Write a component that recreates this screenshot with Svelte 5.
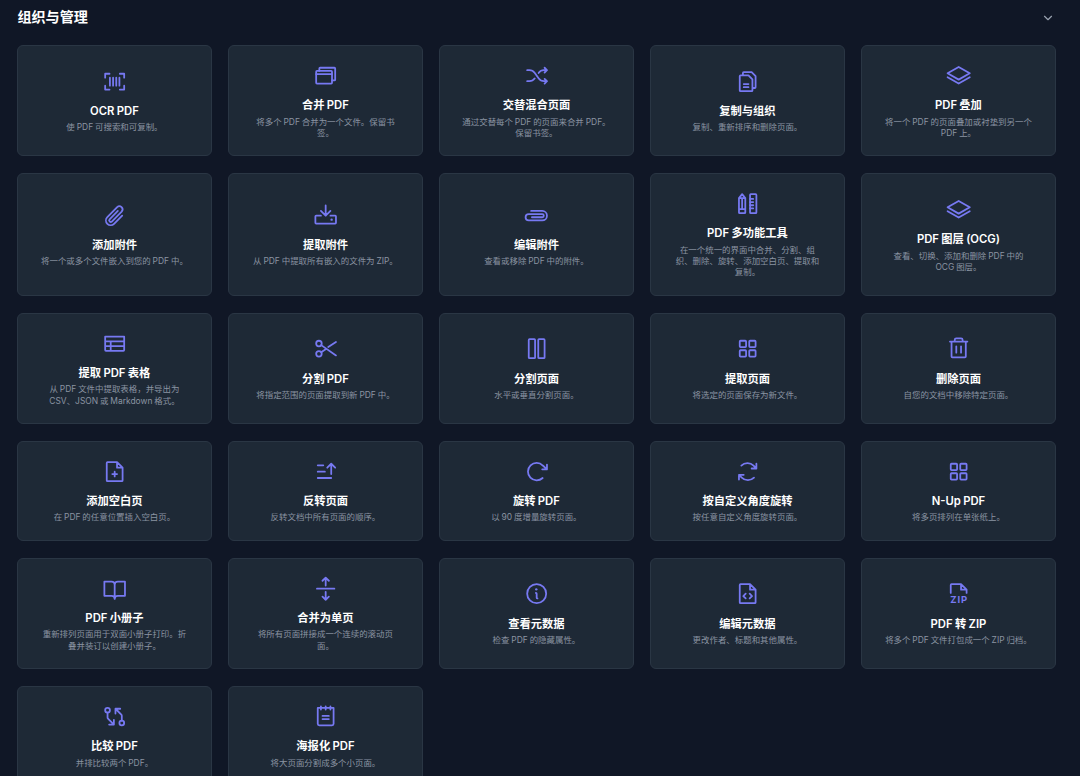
<script>
  const shapes = {
    barcode: '<path d="M180 48h44v40M76 48H32v40M180 208h44v-40M76 208H32v-40M80 88v80M112 88v80M144 88v80M176 88v80"/>',
    browsers: '<rect x="32" y="80" width="160" height="128" rx="8"/><path d="M32 112H192M64 80V56a8 8 0 0 1 8-8H216a8 8 0 0 1 8 8V168a8 8 0 0 1-8 8H192"/>',
    shuffle: '<path d="M32 72H55a64 64 0 0 1 52.1 26.8l41.8 58.4A64 64 0 0 0 201 184H232M208 48l24 24-24 24M208 160l24 24-24 24M147.7 100.5l1.2-1.7A64 64 0 0 1 201 72H232M32 184H55a64 64 0 0 0 52.1-26.8l1.2-1.7"/>',
    files: '<path d="M168 224H56a8 8 0 0 1-8-8V72a8 8 0 0 1 8-8h80l40 40V216a8 8 0 0 1-8 8ZM80 64V40a8 8 0 0 1 8-8h80l40 40V184a8 8 0 0 1-8 8H176M88 152h48M88 184h48"/>',
    stack: '<path d="M16 104 128 40l112 64-112 64ZM16 144l112 64 112-64"/>',
    clip: '<path d="M160 80 76.7 164.7a16 16 0 0 0 22.6 22.6L198.6 86.6a32 32 0 0 0-45.2-45.2L54 142a48 48 0 0 0 67.9 67.9L204 128"/>',
    download: '<path d="M176 128h48a8 8 0 0 1 8 8v64a8 8 0 0 1-8 8H32a8 8 0 0 1-8-8v-64a8 8 0 0 1 8-8H80M128 24V128M80 80l48 48 48-48"/><circle class="dot" cx="188" cy="168" r="12"/>',
    clipFlat: '<path d="M80 144H184a16 16 0 0 0 0-32H48a32 32 0 0 0 0 64H184a48 48 0 0 0 0-96H72"/>',
    pencilRuler: '<rect x="152" y="32" width="64" height="192" rx="8"/><path d="M152 80h32M152 112h32M152 144h32M152 176h32M40 72 72 32l32 40V216a8 8 0 0 1-8 8H48a8 8 0 0 1-8-8ZM40 72h64M40 184h64M72 72V184"/>',
    table: '<path d="M32 56H224V192a8 8 0 0 1-8 8H40a8 8 0 0 1-8-8ZM32 104H224M32 152H224M88 104V200"/>',
    scissors: '<circle cx="60" cy="76" r="28"/><circle cx="60" cy="180" r="28"/><path d="M83 92 232 196M154 112 232 60M83 164l45-30"/>',
    columns: '<rect x="48" y="32" width="64" height="192" rx="8"/><rect x="144" y="32" width="64" height="192" rx="8"/>',
    grid: '<rect x="48" y="48" width="64" height="64" rx="8"/><rect x="144" y="48" width="64" height="64" rx="8"/><rect x="48" y="144" width="64" height="64" rx="8"/><rect x="144" y="144" width="64" height="64" rx="8"/>',
    trash: '<path d="M40 56H216M104 104v64M152 104v64M200 56V208a8 8 0 0 1-8 8H64a8 8 0 0 1-8-8V56M168 56V40a16 16 0 0 0-16-16H104a16 16 0 0 0-16 16V56"/>',
    filePlus: '<path d="M200 224H56a8 8 0 0 1-8-8V40a8 8 0 0 1 8-8h96l56 56V216a8 8 0 0 1-8 8ZM152 32V88h56M104 152h48M128 128v48"/>',
    sort: '<path d="M48 128h72M48 64h56M48 192H184M144 88l40-40 40 40M184 152V48"/>',
    rotate: '<path d="M184 104h48V56M188.4 192a88 88 0 1 1 1.8-126.2L232 104"/>',
    cycle: '<path d="M168 96h48V48M216 96 187.7 67.7A88 88 0 0 0 64 67M88 160H40v48M40 160l28.3 28.3A88 88 0 0 0 192 189"/>',
    book: '<path d="M128 88a32 32 0 0 1 32-32h72V200H160a32 32 0 0 0-32 32M24 200H96a32 32 0 0 1 32 32V88A32 32 0 0 0 96 56H24Z"/>',
    splitV: '<path d="M40 128H216M128 96V16M96 48l32-32 32 32M128 160v80M96 208l32 32 32-32"/>',
    info: '<circle cx="128" cy="128" r="96"/><path d="M120 120a8 8 0 0 1 8 8v40a8 8 0 0 0 8 8"/><circle class="dot" cx="124" cy="84" r="12"/>',
    fileCode: '<path d="M200 224H56a8 8 0 0 1-8-8V40a8 8 0 0 1 8-8h96l56 56V216a8 8 0 0 1-8 8ZM152 32V88h56M148 128l24 24-24 24M108 128l-24 24 24 24"/>',
    fileZip: '<path d="M48 120V40a8 8 0 0 1 8-8h96l56 56v32M152 32V88h56"/><text x="44" y="218" textLength="170">ZIP</text>',
    diff: '<circle cx="56" cy="64" r="24"/><circle cx="200" cy="192" r="24"/><path d="M56 88v49.4a16 16 0 0 0 4.7 11.3L120 208M72 208h48V160M200 168V118.600a16 16 0 0 0-4.7-11.3L136 48M184 48H136V96"/>',
    notepad: '<path d="M48 40H208V200a16 16 0 0 1-16 16H64a16 16 0 0 1-16-16ZM80 24V56M128 24V56M176 24V56M96 120h64M96 152h64"/>'
  };

  const tools = [
    ['barcode', 'OCR PDF', '使 PDF 可搜索和可复制。'],
    ['browsers', '合并 PDF', '将多个 PDF 合并为一个文件。保留书\n签。'],
    ['shuffle', '交替混合页面', '通过交替每个 PDF 的页面来合并 PDF。\n保留书签。'],
    ['files', '复制与组织', '复制、重新排序和删除页面。'],
    ['stack', 'PDF 叠加', '将一个 PDF 的页面叠加或衬垫到另一个\nPDF 上。'],
    ['clip', '添加附件', '将一个或多个文件嵌入到您的 PDF 中。'],
    ['download', '提取附件', '从 PDF 中提取所有嵌入的文件为 ZIP。'],
    ['clipFlat', '编辑附件', '查看或移除 PDF 中的附件。'],
    ['pencilRuler', 'PDF 多功能工具', '在一个统一的界面中合并、分割、组\n织、删除、旋转、添加空白页、提取和\n复制。'],
    ['stack', 'PDF 图层 (OCG)', '查看、切换、添加和删除 PDF 中的\nOCG 图层。'],
    ['table', '提取 PDF 表格', '从 PDF 文件中提取表格，并导出为\nCSV、JSON 或 Markdown 格式。'],
    ['scissors', '分割 PDF', '将指定范围的页面提取到新 PDF 中。'],
    ['columns', '分割页面', '水平或垂直分割页面。'],
    ['grid', '提取页面', '将选定的页面保存为新文件。'],
    ['trash', '删除页面', '自您的文档中移除特定页面。'],
    ['filePlus', '添加空白页', '在 PDF 的任意位置插入空白页。'],
    ['sort', '反转页面', '反转文档中所有页面的顺序。'],
    ['rotate', '旋转 PDF', '以 90 度增量旋转页面。'],
    ['cycle', '按自定义角度旋转', '按任意自定义角度旋转页面。'],
    ['grid', 'N-Up PDF', '将多页排列在单张纸上。'],
    ['book', 'PDF 小册子', '重新排列页面用于双面小册子打印。折\n叠并装订以创建小册子。'],
    ['splitV', '合并为单页', '将所有页面拼接成一个连续的滚动页\n面。'],
    ['info', '查看元数据', '检查 PDF 的隐藏属性。'],
    ['fileCode', '编辑元数据', '更改作者、标题和其他属性。'],
    ['fileZip', 'PDF 转 ZIP', '将多个 PDF 文件打包成一个 ZIP 归档。'],
    ['diff', '比较 PDF', '并排比较两个 PDF。'],
    ['notepad', '海报化 PDF', '将大页面分割成多个小页面。']
  ];
</script>

<main lang="zh-CN">
  <header>
    <h2>组织与管理</h2>
    <svg class="chevron" viewBox="0 0 24 24"><path d="m6 9 6 6 6-6" /></svg>
  </header>
  <div class="grid">
    {#each tools as [icon, title, text]}
      <article>
        <svg class="icon" viewBox="0 0 256 256">{@html shapes[icon]}</svg>
        <h3>{title}</h3>
        <p>{text}</p>
      </article>
    {/each}
  </div>
</main>

<style>
  :global(body) {
    margin: 0;
    background: #101726;
    overflow: hidden;
  }
  main {
    --u: 0.7044px;
    box-sizing: border-box;
    height: 776px;
    overflow: hidden;
    padding: 7px 24.5px 0 17.4px;
    font-family: Inter, "Noto Sans CJK SC", sans-serif;
  }
  header {
    display: flex;
    align-items: center;
    justify-content: space-between;
    height: 20px;
    margin-bottom: 18.2px;
  }
  h2 {
    margin: 0;
    font-size: calc(20 * var(--u));
    line-height: 20px;
    font-weight: 700;
    color: #fff;
  }
  .chevron {
    width: 14px;
    height: 14px;
    margin: 2px 1px 0 0;
    fill: none;
    stroke: #99a1af;
    stroke-width: 2;
    stroke-linecap: round;
    stroke-linejoin: round;
  }
  .grid {
    display: grid;
    grid-template-columns: repeat(5, minmax(0, 1fr));
    gap: calc(24 * var(--u));
  }
  article {
    box-sizing: border-box;
    display: flex;
    flex-direction: column;
    align-items: center;
    justify-content: center;
    padding: calc(24 * var(--u)) 0;
    border: 1px solid #2a3644;
    border-radius: 6px;
    margin: 0;
    background: #1e2936;
    text-align: center;
  }
  .icon {
    flex: none;
    width: calc(36 * var(--u));
    height: calc(36 * var(--u));
    margin-bottom: calc(12.6 * var(--u));
    fill: none;
    stroke: #7779f2;
    stroke-width: 18;
    stroke-linecap: round;
    stroke-linejoin: round;
  }
  .icon :global(.dot) {
    fill: #7779f2;
    stroke: none;
  }
  .icon :global(text) {
    fill: #7779f2;
    stroke: none;
    font-size: 96px;
    font-weight: 700;
  }
  h3 {
    margin: 0;
    font-size: calc(16 * var(--u));
    line-height: calc(24 * var(--u));
    font-weight: 600;
    color: #fff;
    white-space: nowrap;
    word-spacing: -0.5px;
  }
  p {
    margin: calc(3.6 * var(--u)) 0 calc(-1 * var(--u));
    font-size: calc(12 * var(--u));
    line-height: calc(16 * var(--u));
    color: #8b94a2;
    white-space: pre;
    word-spacing: -0.5px;
  }
</style>
